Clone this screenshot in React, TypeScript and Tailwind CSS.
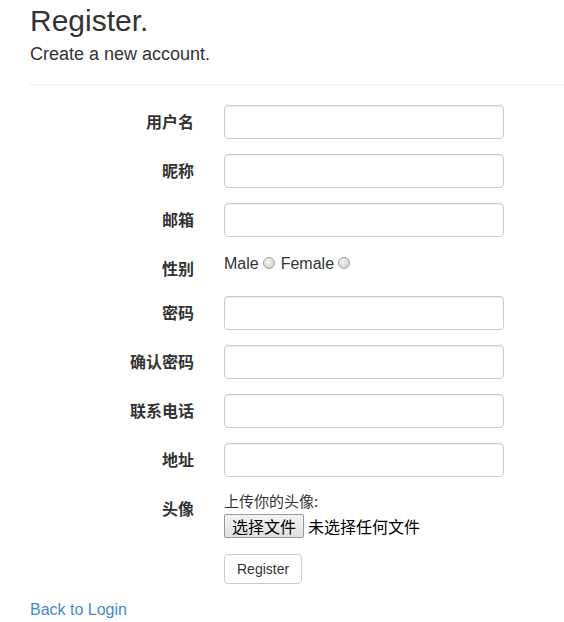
import React from "react";

const fields1 = ["用户名", "昵称", "邮箱"];
const fields2 = ["密码", "确认密码", "联系电话", "地址"];

function Label({ text }: { text: string }) {
  return (
    <div
      className="w-[164px] shrink-0 pt-[6px] text-right text-[16px] leading-[20px] font-bold text-[#333]"
      style={{ fontFamily: '"Noto Sans CJK SC", sans-serif' }}
    >
      {text}
    </div>
  );
}

function InputRow({ text }: { text: string }) {
  return (
    <div className="flex mb-[15px]">
      <Label text={text} />
      <div className="ml-[30px]">
        <input
          type="text"
          className="block w-[280px] h-[34px] rounded-[4px] border border-[#ccc] bg-white px-3 shadow-[inset_0_1px_1px_rgba(0,0,0,0.075)] outline-none"
        />
      </div>
    </div>
  );
}

function Radio() {
  return (
    <span className="inline-block w-[12px] h-[12px] rounded-full border border-[#a0a0a0] bg-[radial-gradient(circle_at_40%_35%,#f4f4f4,#c8c8c8)] align-middle ml-[4px] mr-[6px] relative top-[-2px]" />
  );
}

export default function App() {
  return (
    <div
      className="min-h-[622px] bg-white text-[#333] pl-[30px]"
      style={{ fontFamily: '"Liberation Sans", Arial, "Noto Sans CJK SC", sans-serif' }}
    >
      <h2 className="pt-[4px] text-[30px] leading-[33px] font-normal">Register.</h2>
      <h4 className="mt-[7px] text-[18px] leading-[20px] font-normal">Create a new account.</h4>
      <hr className="mt-[20px] mb-[20px] border-0 border-t border-[#eee]" />

      <div>
        {fields1.map((f) => (
          <InputRow key={f} text={f} />
        ))}
        <div className="flex h-[29px] mb-[15px]">
          <Label text="性别" />
          <div className="ml-[30px] text-[16px] leading-[20px] pt-[2px]">
            Male
            <Radio />
            Female
            <Radio />
          </div>
        </div>
        {fields2.map((f) => (
          <InputRow key={f} text={f} />
        ))}
        <div className="flex mb-[16px]">
          <Label text="头像" />
          <div className="ml-[30px] text-[16px] leading-[18px]" style={{ fontFamily: '"Noto Sans CJK SC", sans-serif' }}>
            <div className="text-[15px] leading-[18px]">上传你的头像:</div>
            <div className="flex items-center mt-[4px]">
              <span className="inline-flex items-center h-[24px] px-[7px] border border-[#999] rounded-[2px] bg-[linear-gradient(#f3f3f3,#e0e0e0)] text-[16px] leading-[20px] text-black">
                选择文件
              </span>
              <span className="ml-[4px] text-[16px] text-black">未选择任何文件</span>
            </div>
          </div>
        </div>
        <div className="flex">
          <div className="w-[164px] shrink-0" />
          <div className="ml-[30px]">
            <button className="h-[30px] px-[12px] rounded-[4px] border border-[#ccc] bg-white text-[14px] text-[#333]">
              Register
            </button>
          </div>
        </div>
      </div>

      <div className="mt-[14px]">
        <a className="text-[16px] text-[#428bca]" href="#">
          Back to Login
        </a>
      </div>
    </div>
  );
}
